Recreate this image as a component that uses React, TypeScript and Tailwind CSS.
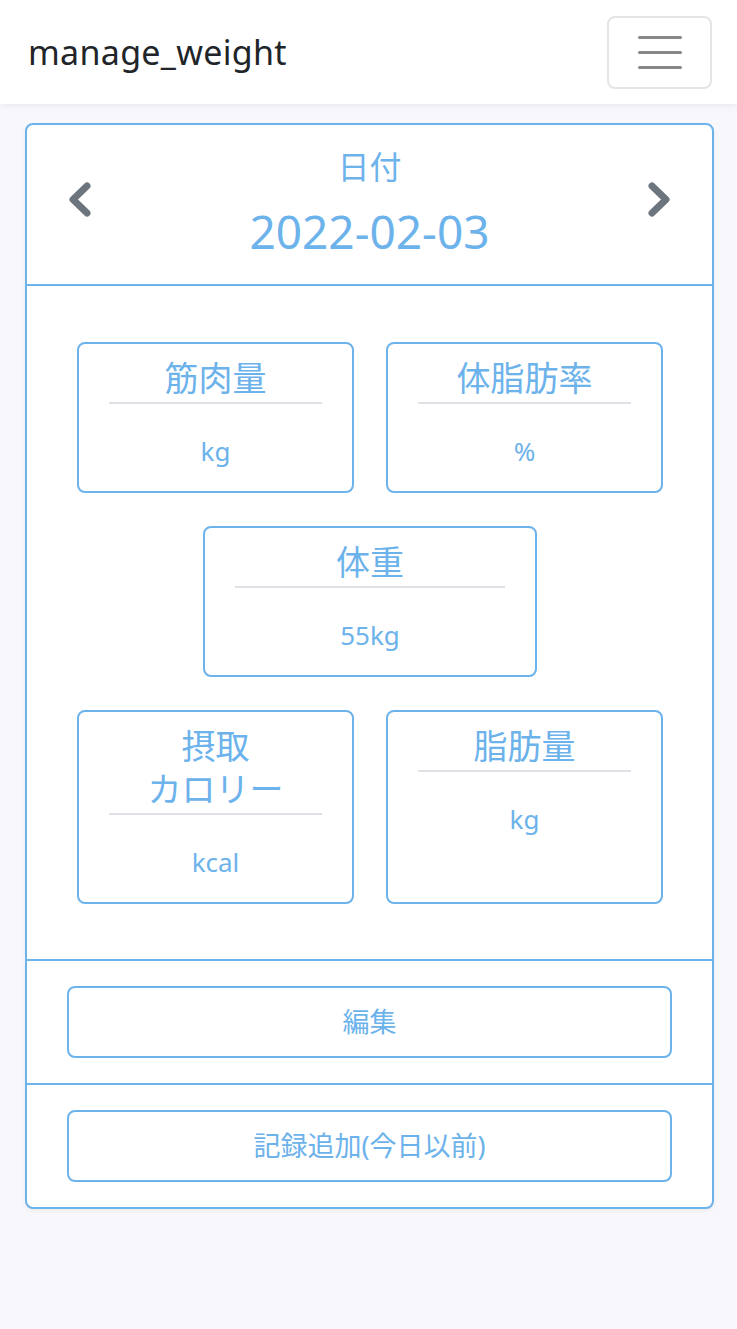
import React from "react";

const FONT = '"Noto Sans", "Noto Sans CJK JP", sans-serif';

type Stat = {
  title: React.ReactNode;
  value: string;
};

const Chevron = ({ dir }: { dir: "left" | "right" }) => (
  <svg width="30" height="40" viewBox="0 0 30 40" className="shrink-0 mb-[10px]">
    <polyline
      points={dir === "left" ? "20,6 6,19.5 20,33" : "10,6 24,19.5 10,33"}
      fill="none"
      stroke="#6c757d"
      strokeWidth="7"
      strokeLinecap="round"
      strokeLinejoin="round"
    />
  </svg>
);

const StatBox = ({ stat, className = "" }: { stat: Stat; className?: string }) => (
  <div className={`border-2 border-[#6cb2eb] rounded-[8px] bg-white pt-[13px] pb-[22px] text-center text-[#6cb2eb] ${className}`}>
    <div className="text-[34px] leading-[43px]">{stat.title}</div>
    <div className="mx-[30px] mt-[2px] h-[2px] bg-[#dee2e6]" />
    <div className="mt-[29px] text-[26px] leading-[36px]">{stat.value}</div>
  </div>
);

export default function App() {
  return (
    <div className="min-h-[1329px] bg-[#f8f8fc]" style={{ fontFamily: FONT }}>
      <nav className="h-[104px] bg-white shadow-[0_2px_6px_rgba(0,0,0,0.06)] flex items-center justify-between pl-[28px] pr-[25px]">
        <span className="text-[34px] text-[#212529] tracking-[0.3px]">manage_weight</span>
        <button className="w-[105px] h-[73px] border-2 border-[#e5e5e5] rounded-[8px] flex flex-col items-center justify-center gap-[12px]">
          <span className="block w-[44px] h-[3px] rounded bg-[#888]" />
          <span className="block w-[44px] h-[3px] rounded bg-[#888]" />
          <span className="block w-[44px] h-[3px] rounded bg-[#888]" />
        </button>
      </nav>

      <div className="pl-[25px] pr-[23px] pt-[19px]">
        <div className="border-2 border-[#6cb2eb] rounded-[8px] bg-white shadow-[0_2px_4px_rgba(0,0,0,0.05)]">
          <div className="flex items-center justify-between px-[40px] h-[161px] border-b-2 border-[#6cb2eb]">
            <Chevron dir="left" />
            <div className="flex flex-col items-center text-[#6cb2eb] pb-[2px]">
              <span className="text-[32px] leading-[40px]">日付</span>
              <span className="text-[46px] leading-[58px] mt-[15px]">2022-02-03</span>
            </div>
            <Chevron dir="right" />
          </div>

          <div className="grid grid-cols-2 gap-x-[32px] gap-y-[33px] pl-[50px] pr-[49px] pt-[56px] pb-[55px] border-b-2 border-[#6cb2eb]">
            <StatBox stat={{ title: "筋肉量", value: "kg" }} />
            <StatBox stat={{ title: "体脂肪率", value: "%" }} />
            <StatBox stat={{ title: "体重", value: "55kg" }} className="col-span-2 justify-self-center w-[334px]" />
            <StatBox stat={{ title: <>摂取<br />カロリー</>, value: "kcal" }} />
            <StatBox stat={{ title: "脂肪量", value: "kg" }} />
          </div>

          <div className="px-[40px] py-[25px] border-b-2 border-[#6cb2eb]">
            <button className="w-full h-[72px] border-2 border-[#6cb2eb] rounded-[8px] text-[27px] text-[#6cb2eb]">編集</button>
          </div>
          <div className="px-[40px] py-[25px]">
            <button className="w-full h-[72px] border-2 border-[#6cb2eb] rounded-[8px] text-[27px] text-[#6cb2eb]">記録追加(今日以前)</button>
          </div>
        </div>
      </div>
    </div>
  );
}
